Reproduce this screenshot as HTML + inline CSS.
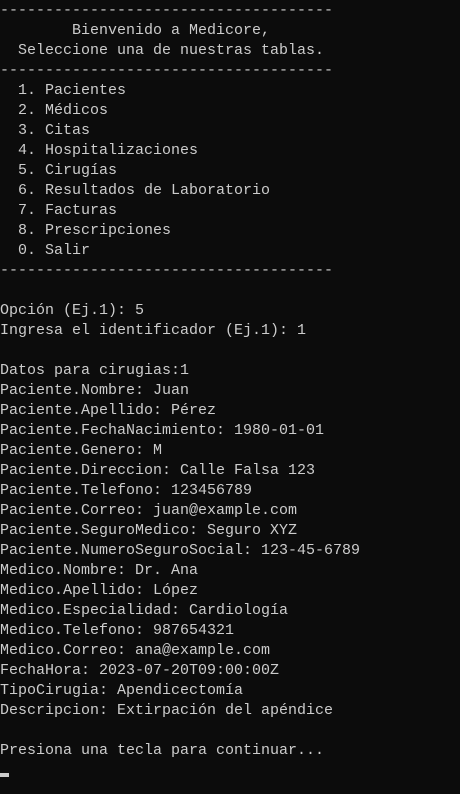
<!DOCTYPE html>
<html><head><meta charset="utf-8"><style>
html,body{margin:0;padding:0;background:#0c0c0c;width:460px;height:794px;overflow:hidden}
pre{margin:0;padding-top:1px;font-family:"Liberation Mono",monospace;font-size:15px;line-height:20px;color:#cccccc;white-space:pre}
.cur{display:inline-block;width:9px;height:4px;background:#cccccc;vertical-align:-3px}
</style></head><body><pre>-------------------------------------
        Bienvenido a Medicore,
  Seleccione una de nuestras tablas.
-------------------------------------
  1. Pacientes
  2. Médicos
  3. Citas
  4. Hospitalizaciones
  5. Cirugías
  6. Resultados de Laboratorio
  7. Facturas
  8. Prescripciones
  0. Salir
-------------------------------------

Opción (Ej.1): 5
Ingresa el identificador (Ej.1): 1

Datos para cirugias:1
Paciente.Nombre: Juan
Paciente.Apellido: Pérez
Paciente.FechaNacimiento: 1980-01-01
Paciente.Genero: M
Paciente.Direccion: Calle Falsa 123
Paciente.Telefono: 123456789
Paciente.Correo: juan@example.com
Paciente.SeguroMedico: Seguro XYZ
Paciente.NumeroSeguroSocial: 123-45-6789
Medico.Nombre: Dr. Ana
Medico.Apellido: López
Medico.Especialidad: Cardiología
Medico.Telefono: 987654321
Medico.Correo: ana@example.com
FechaHora: 2023-07-20T09:00:00Z
TipoCirugia: Apendicectomía
Descripcion: Extirpación del apéndice

Presiona una tecla para continuar...
<span class="cur"></span></pre></body></html>
